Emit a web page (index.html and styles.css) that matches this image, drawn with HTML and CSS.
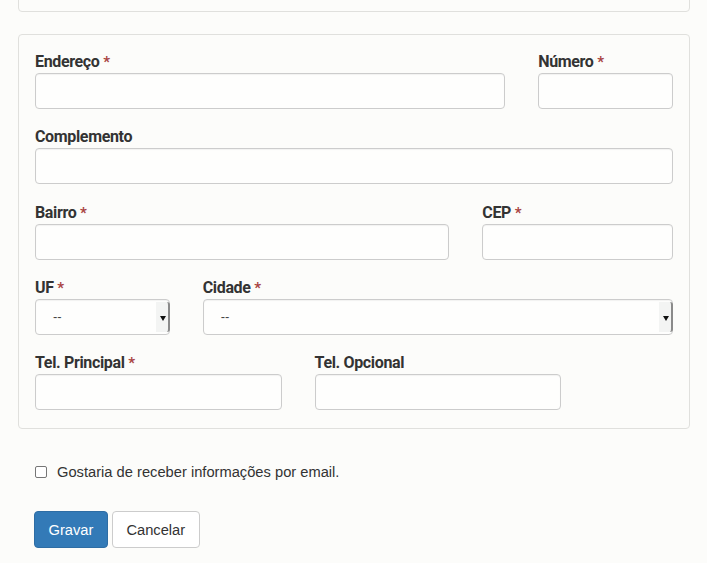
FILE: index.html
```html
<!DOCTYPE html>
<html lang="pt-BR">
<head>
<meta charset="utf-8">
<title>Endereço</title>
<link rel="stylesheet" href="styles.css">
</head>
<body>
<div class="page">
  <div class="panel panel-top"></div>
  <div class="panel panel-main">
    <div class="grid">
      <div class="group span-9"><label class="lbl">Endereço <span class="req">*</span></label><div class="input"></div></div>
      <div class="group span-3"><label class="lbl">Número <span class="req">*</span></label><div class="input"></div></div>
      <div class="group span-12"><label class="lbl">Complemento</label><div class="input"></div></div>
      <div class="group span-8"><label class="lbl">Bairro <span class="req">*</span></label><div class="input"></div></div>
      <div class="group span-4"><label class="lbl">CEP <span class="req">*</span></label><div class="input"></div></div>
      <div class="group span-3"><label class="lbl">UF <span class="req">*</span></label><div class="input select"><span class="opt">--</span><span class="arrow"></span></div></div>
      <div class="group span-9"><label class="lbl">Cidade <span class="req">*</span></label><div class="input select"><span class="opt">--</span><span class="arrow"></span></div></div>
      <div class="group span-5 last"><label class="lbl">Tel. Principal <span class="req">*</span></label><div class="input"></div></div>
      <div class="group span-5 last"><label class="lbl">Tel. Opcional</label><div class="input"></div></div>
    </div>
  </div>
  <div class="check-row"><span class="checkbox"></span><span class="check-text">Gostaria de receber informações por email.</span></div>
  <div class="actions">
    <button class="btn btn-primary">Gravar</button>
    <button class="btn btn-default">Cancelar</button>
  </div>
</div>
</body>
</html>
```
FILE: styles.css
```css
html, body {
  margin: 0;
  padding: 0;
  background: #fcfcfa;
}
body {
  font-family: "Liberation Sans", Arial, sans-serif;
  font-size: 14px;
  color: #333;
}
.page {
  padding: 0 17px 0 18px;
  width: 672px;
}
.panel {
  border: 1px solid #e0e0dd;
  border-radius: 4px;
  background: #fcfcfa;
  box-sizing: border-box;
}
.panel-top {
  height: 40px;
  margin-top: -28px;
  border-top-left-radius: 0;
  border-top-right-radius: 0;
}
.panel-main {
  margin-top: 22px;
  padding: 15px 16px 16px 16px;
  height: 395px;
}
.grid {
  display: grid;
  grid-template-columns: repeat(12, 1fr);
  column-gap: 33px;
  row-gap: 16.25px;
}
.span-3 { grid-column: span 3; }
.span-4 { grid-column: span 4; }
.span-5 { grid-column: span 5; }
.span-8 { grid-column: span 8; }
.span-9 { grid-column: span 9; }
.span-12 { grid-column: span 12; }
.lbl {
  display: block;
  font-family: Roboto, "Liberation Sans", sans-serif;
  font-weight: 700;
  font-size: 16px;
  letter-spacing: -0.35px;
  line-height: 20px;
  padding-top: 2px;
  margin-bottom: 1px;
  color: #333;
}
.req {
  color: #a94442;
  font-weight: 700;
  font-size: 15px;
}
.input {
  height: 36px;
  box-sizing: border-box;
  border: 1px solid #ccc;
  border-radius: 4px;
  background: #fefefd;
  box-shadow: inset 0 1px 1px rgba(0,0,0,0.05);
}
.select {
  position: relative;
  display: flex;
  align-items: center;
  padding-left: 17px;
  font-size: 13px;
  color: #444;
}
.select .arrow {
  position: absolute;
  right: -1px;
  top: 2px;
  bottom: 2px;
  width: 12px;
  background: #f3f4f3;
  border-right: 2px solid #8a8a8a;
  border-radius: 0 3px 3px 0;
}
.select .arrow::after {
  content: "";
  position: absolute;
  left: 4px;
  top: 14px;
  border-left: 3px solid transparent;
  border-right: 3px solid transparent;
  border-top: 5px solid #111;
}
.check-row {
  display: flex;
  align-items: center;
  margin-top: 34px;
  padding-left: 17px;
  height: 17px;
}
.checkbox {
  width: 10px;
  height: 10px;
  border: 1px solid #767676;
  border-radius: 2px;
  background: #fff;
  margin-right: 10px;
}
.check-text {
  font-size: 14.7px;
  color: #333;
}
.actions {
  display: flex;
  gap: 4px;
  margin-top: 31px;
  padding-left: 16px;
}
.btn {
  font-family: "Liberation Sans", Arial, sans-serif;
  font-size: 14.7px;
  height: 37px;
  padding: 0 13.5px;
  border-radius: 4px;
  border: 1px solid #ccc;
  cursor: pointer;
}
.btn-primary {
  background: #337ab7;
  border-color: #2e6da4;
  color: #fff;
}
.btn-default {
  background: #fff;
  color: #333;
}
```
